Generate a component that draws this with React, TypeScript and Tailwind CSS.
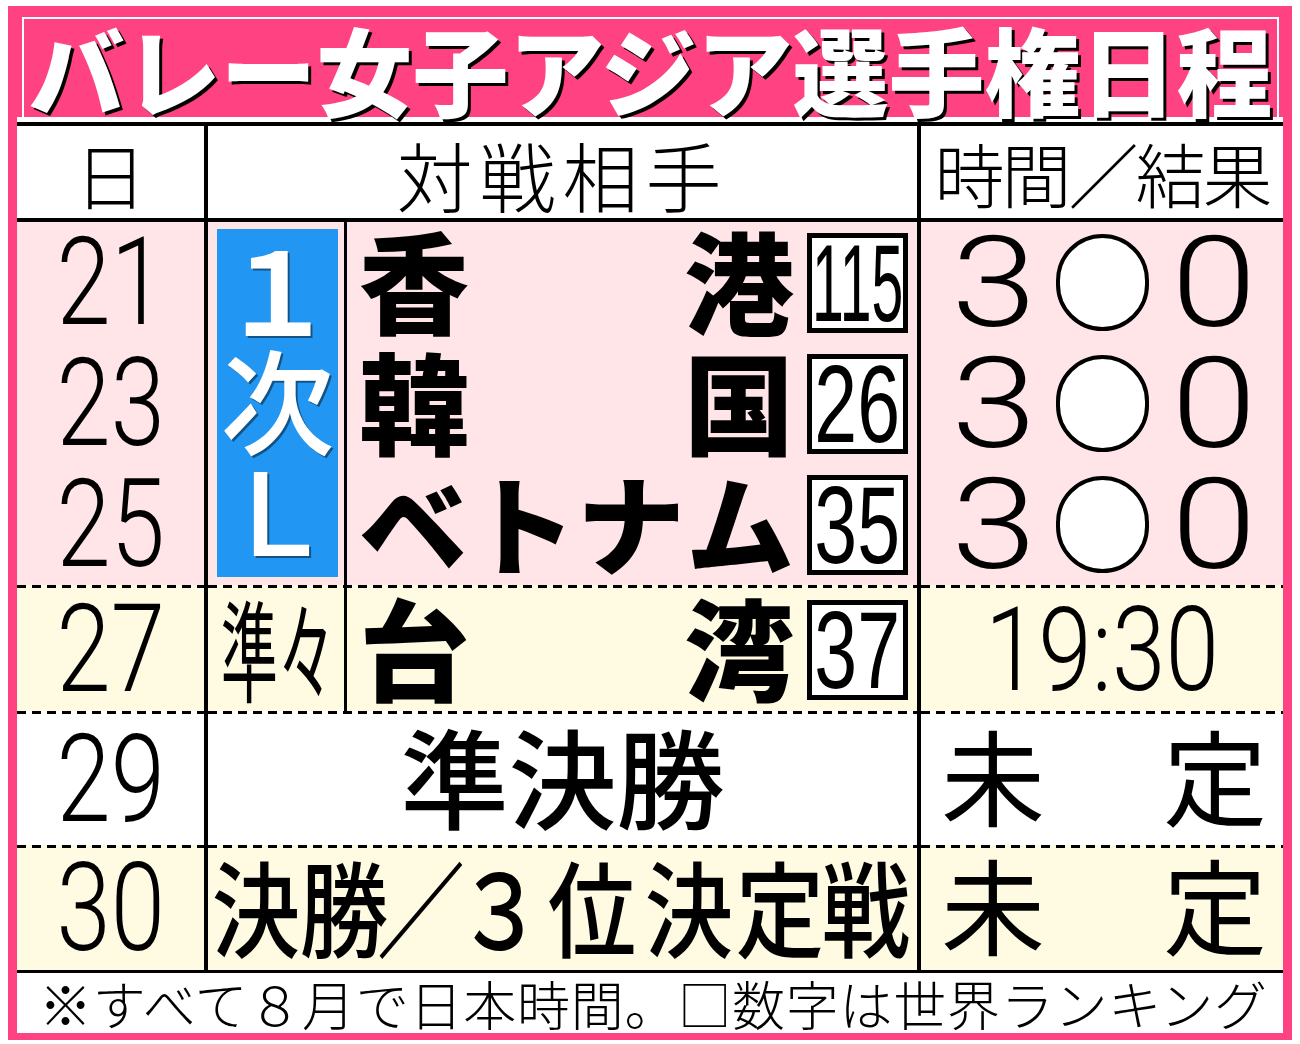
import React from "react";

// Volleyball women's Asian championship schedule graphic

const dash =
  "h-[3px] shrink-0 [background-image:repeating-linear-gradient(to_right,#000_0_9px,transparent_9px_15px)]";

function Dash() {
  return <div className={dash} />;
}

function Day({ n, fixed }: { n: string; fixed?: boolean }) {
  return (
    <div className={`${fixed ? "h-[121px] shrink-0" : "flex-1"} flex items-center justify-center overflow-visible`}>
      <span className="block font-['Roboto','Liberation_Sans',sans-serif] font-light text-[122px] leading-none scale-x-[0.8]">
        {n}
      </span>
    </div>
  );
}

function Score() {
  return (
    <div className="h-[121px] shrink-0 flex items-center pl-[38px]">
      <div className="w-[70px] flex justify-center">
        <span className="block font-['Roboto','Liberation_Sans',sans-serif] font-light text-[126px] leading-none scale-x-[1.22]">
          3
        </span>
      </div>
      <div className="ml-[27px] w-[93px] h-[97px] rounded-full border-[4px] border-black bg-white" />
      <div className="ml-[30px] w-[70px] flex justify-center">
        <span className="block font-['Roboto','Liberation_Sans',sans-serif] font-light text-[126px] leading-none scale-x-[1.22]">
          0
        </span>
      </div>
    </div>
  );
}

function Rank({ n, squeeze }: { n: string; squeeze: string }) {
  return (
    <div className="w-[101px] h-[100px] shrink-0 border-[5px] border-black bg-white flex items-center justify-center">
      <span className={`block font-['Liberation_Sans',sans-serif] text-[110px] leading-none ${squeeze}`}>
        {n}
      </span>
    </div>
  );
}

function Team({
  chars,
  rank,
  squeeze,
  size = "text-[110px]",
  fixed = true,
}: {
  chars: string[];
  rank: string;
  squeeze: string;
  size?: string;
  fixed?: boolean;
}) {
  return (
    <div className={`${fixed ? "h-[121px] shrink-0" : "flex-1"} flex items-center pl-[12px] pr-[9px]`}>
      <div
        className={`flex-1 min-w-0 flex justify-between pr-[13px] -translate-y-[5px] font-['Noto_Sans_CJK_JP',sans-serif] font-black leading-none ${size}`}
      >
        {chars.map((c, i) => (
          <span key={i}>{c}</span>
        ))}
      </div>
      <Rank n={rank} squeeze={squeeze} />
    </div>
  );
}

function Mitei() {
  return (
    <div className="flex-1 flex items-center justify-between pl-[20px] pr-[16px] pb-[12px] font-['Noto_Sans_CJK_JP',sans-serif] text-[104px] leading-none">
      <span>未</span>
      <span>定</span>
    </div>
  );
}

const finals = [
  { c: "決", w: "w-[95px]" },
  { c: "勝", w: "w-[82px]" },
  { c: "／", w: "w-[72px]" },
  { c: "３", w: "w-[85px]" },
  { c: "位", w: "w-[100px]" },
  { c: "決", w: "w-[94px]" },
  { c: "定", w: "w-[87px]" },
  { c: "戦", w: "w-[86px]" },
];

export default function App() {
  return (
    <div className="w-[1300px] h-[1044px] bg-white pt-[6px] px-[8px] font-['Noto_Sans_CJK_JP',sans-serif] text-black">
      <div className="border-x-[9px] border-t-[9px] border-b-[7px] border-[#ff4282] bg-white">
        {/* title */}
        <div className="bg-[#ff4282] pl-[5px] pr-[4px] pt-[2px]">
          <div className="h-[100px] border-x-2 border-t-2 border-white flex items-center justify-center">
            <span className="text-white font-black text-[96px] leading-none [text-shadow:3px_3px_0_#000]">
              バレー女子アジア選手権日程
            </span>
          </div>
        </div>
        <div className="h-[5px]" />

        {/* header */}
        <div className="grid grid-cols-[191px_713px_362px] h-[100px] border-y-4 border-black bg-white font-light">
          <div className="border-r-4 border-black flex items-center justify-center pt-[2px] text-[72px] leading-none">
            日
          </div>
          <div className="border-r-4 border-black flex items-center justify-center pt-[4px] text-[76px] leading-none tracking-[7px]">
            対戦相手
          </div>
          <div className="flex items-center justify-center pt-[2px] text-[70px] leading-none tracking-[-3px]">
            時間／結果
          </div>
        </div>

        {/* 1st round group */}
        <div className="grid grid-cols-[191px_713px_362px] grid-rows-[363px] h-[363px] overflow-hidden bg-[#ffe4e8]">
          <div className="border-r-4 border-black flex flex-col">
            <Day n="21" fixed />
            <Day n="23" fixed />
            <Day n="25" fixed />
          </div>
          <div className="border-r-4 border-black grid grid-cols-[139px_570px]">
            <div className="border-r-[3px] border-black pl-[9px] pr-[6px] pt-[7px] pb-[8px]">
              <div className="h-full bg-[#2196f3] pb-[12px] flex flex-col items-center justify-center text-white font-bold text-[114px] leading-none [text-shadow:2px_2px_0_rgba(0,0,0,0.45)]">
                <span className="h-[110px] flex items-center">１</span>
                <span className="h-[110px] flex items-center font-medium">次</span>
                <span className="h-[110px] flex items-center font-medium">Ｌ</span>
              </div>
            </div>
            <div className="flex flex-col">
              <Team chars={["香", "港"]} rank="115" squeeze="scale-x-[0.52]" />
              <Team chars={["韓", "国"]} rank="26" squeeze="scale-x-[0.7]" />
              <Team chars={["ベ", "ト", "ナ", "ム"]} rank="35" squeeze="scale-x-[0.7]" size="text-[108px]" />
            </div>
          </div>
          <div className="flex flex-col">
            <Score />
            <Score />
            <Score />
          </div>
        </div>

        {/* quarterfinal */}
        <div className="grid grid-cols-[191px_713px_362px] h-[126px] bg-[#fffae2]">
          <div className="border-r-4 border-black flex flex-col">
            <Dash />
            <Day n="27" />
          </div>
          <div className="border-r-4 border-black flex flex-col">
            <Dash />
            <div className="flex-1 grid grid-cols-[139px_570px]">
              <div className="border-r-[3px] border-black flex items-center justify-center pl-[4px] pb-[8px]">
                <span className="block text-[110px] leading-none scale-x-[0.52]">準々</span>
              </div>
              <div className="flex">
                <Team chars={["台", "湾"]} rank="37" squeeze="scale-x-[0.7]" fixed={false} />
              </div>
            </div>
          </div>
          <div className="flex flex-col">
            <Dash />
            <div className="flex-1 flex items-center justify-center">
              <span className="block font-['Roboto','Liberation_Sans',sans-serif] font-light text-[116px] leading-none scale-x-[0.83]">
                19:30
              </span>
            </div>
          </div>
        </div>

        {/* semifinal */}
        <div className="grid grid-cols-[191px_713px_362px] h-[134px] bg-white">
          <div className="border-r-4 border-black flex flex-col">
            <Dash />
            <Day n="29" />
          </div>
          <div className="border-r-4 border-black flex flex-col">
            <Dash />
            <div className="flex-1 flex items-center justify-center pb-[12px] text-[108px] font-medium leading-none">
              準決勝
            </div>
          </div>
          <div className="flex flex-col">
            <Dash />
            <Mitei />
          </div>
        </div>

        {/* final */}
        <div className="grid grid-cols-[191px_713px_362px] h-[125px] bg-[#fffae2]">
          <div className="border-r-4 border-black flex flex-col">
            <Dash />
            <Day n="30" />
          </div>
          <div className="border-r-4 border-black flex flex-col">
            <Dash />
            <div className="flex-1 flex items-center pb-[8px]">
              {finals.map((f, i) => (
                <div key={i} className={`${f.w} flex justify-center`}>
                  <span className="block text-[104px] font-medium leading-none scale-x-[0.85]">{f.c}</span>
                </div>
              ))}
            </div>
          </div>
          <div className="flex flex-col">
            <Dash />
            <Mitei />
          </div>
        </div>

        {/* footnote */}
        <div className="h-[63px] border-t-[3px] border-black bg-white flex items-center pl-[22px] text-[53px] font-light leading-none tracking-[0.75px] whitespace-nowrap">
          ※すべて８月で日本時間。□数字は世界ランキング
        </div>
      </div>
    </div>
  );
}
